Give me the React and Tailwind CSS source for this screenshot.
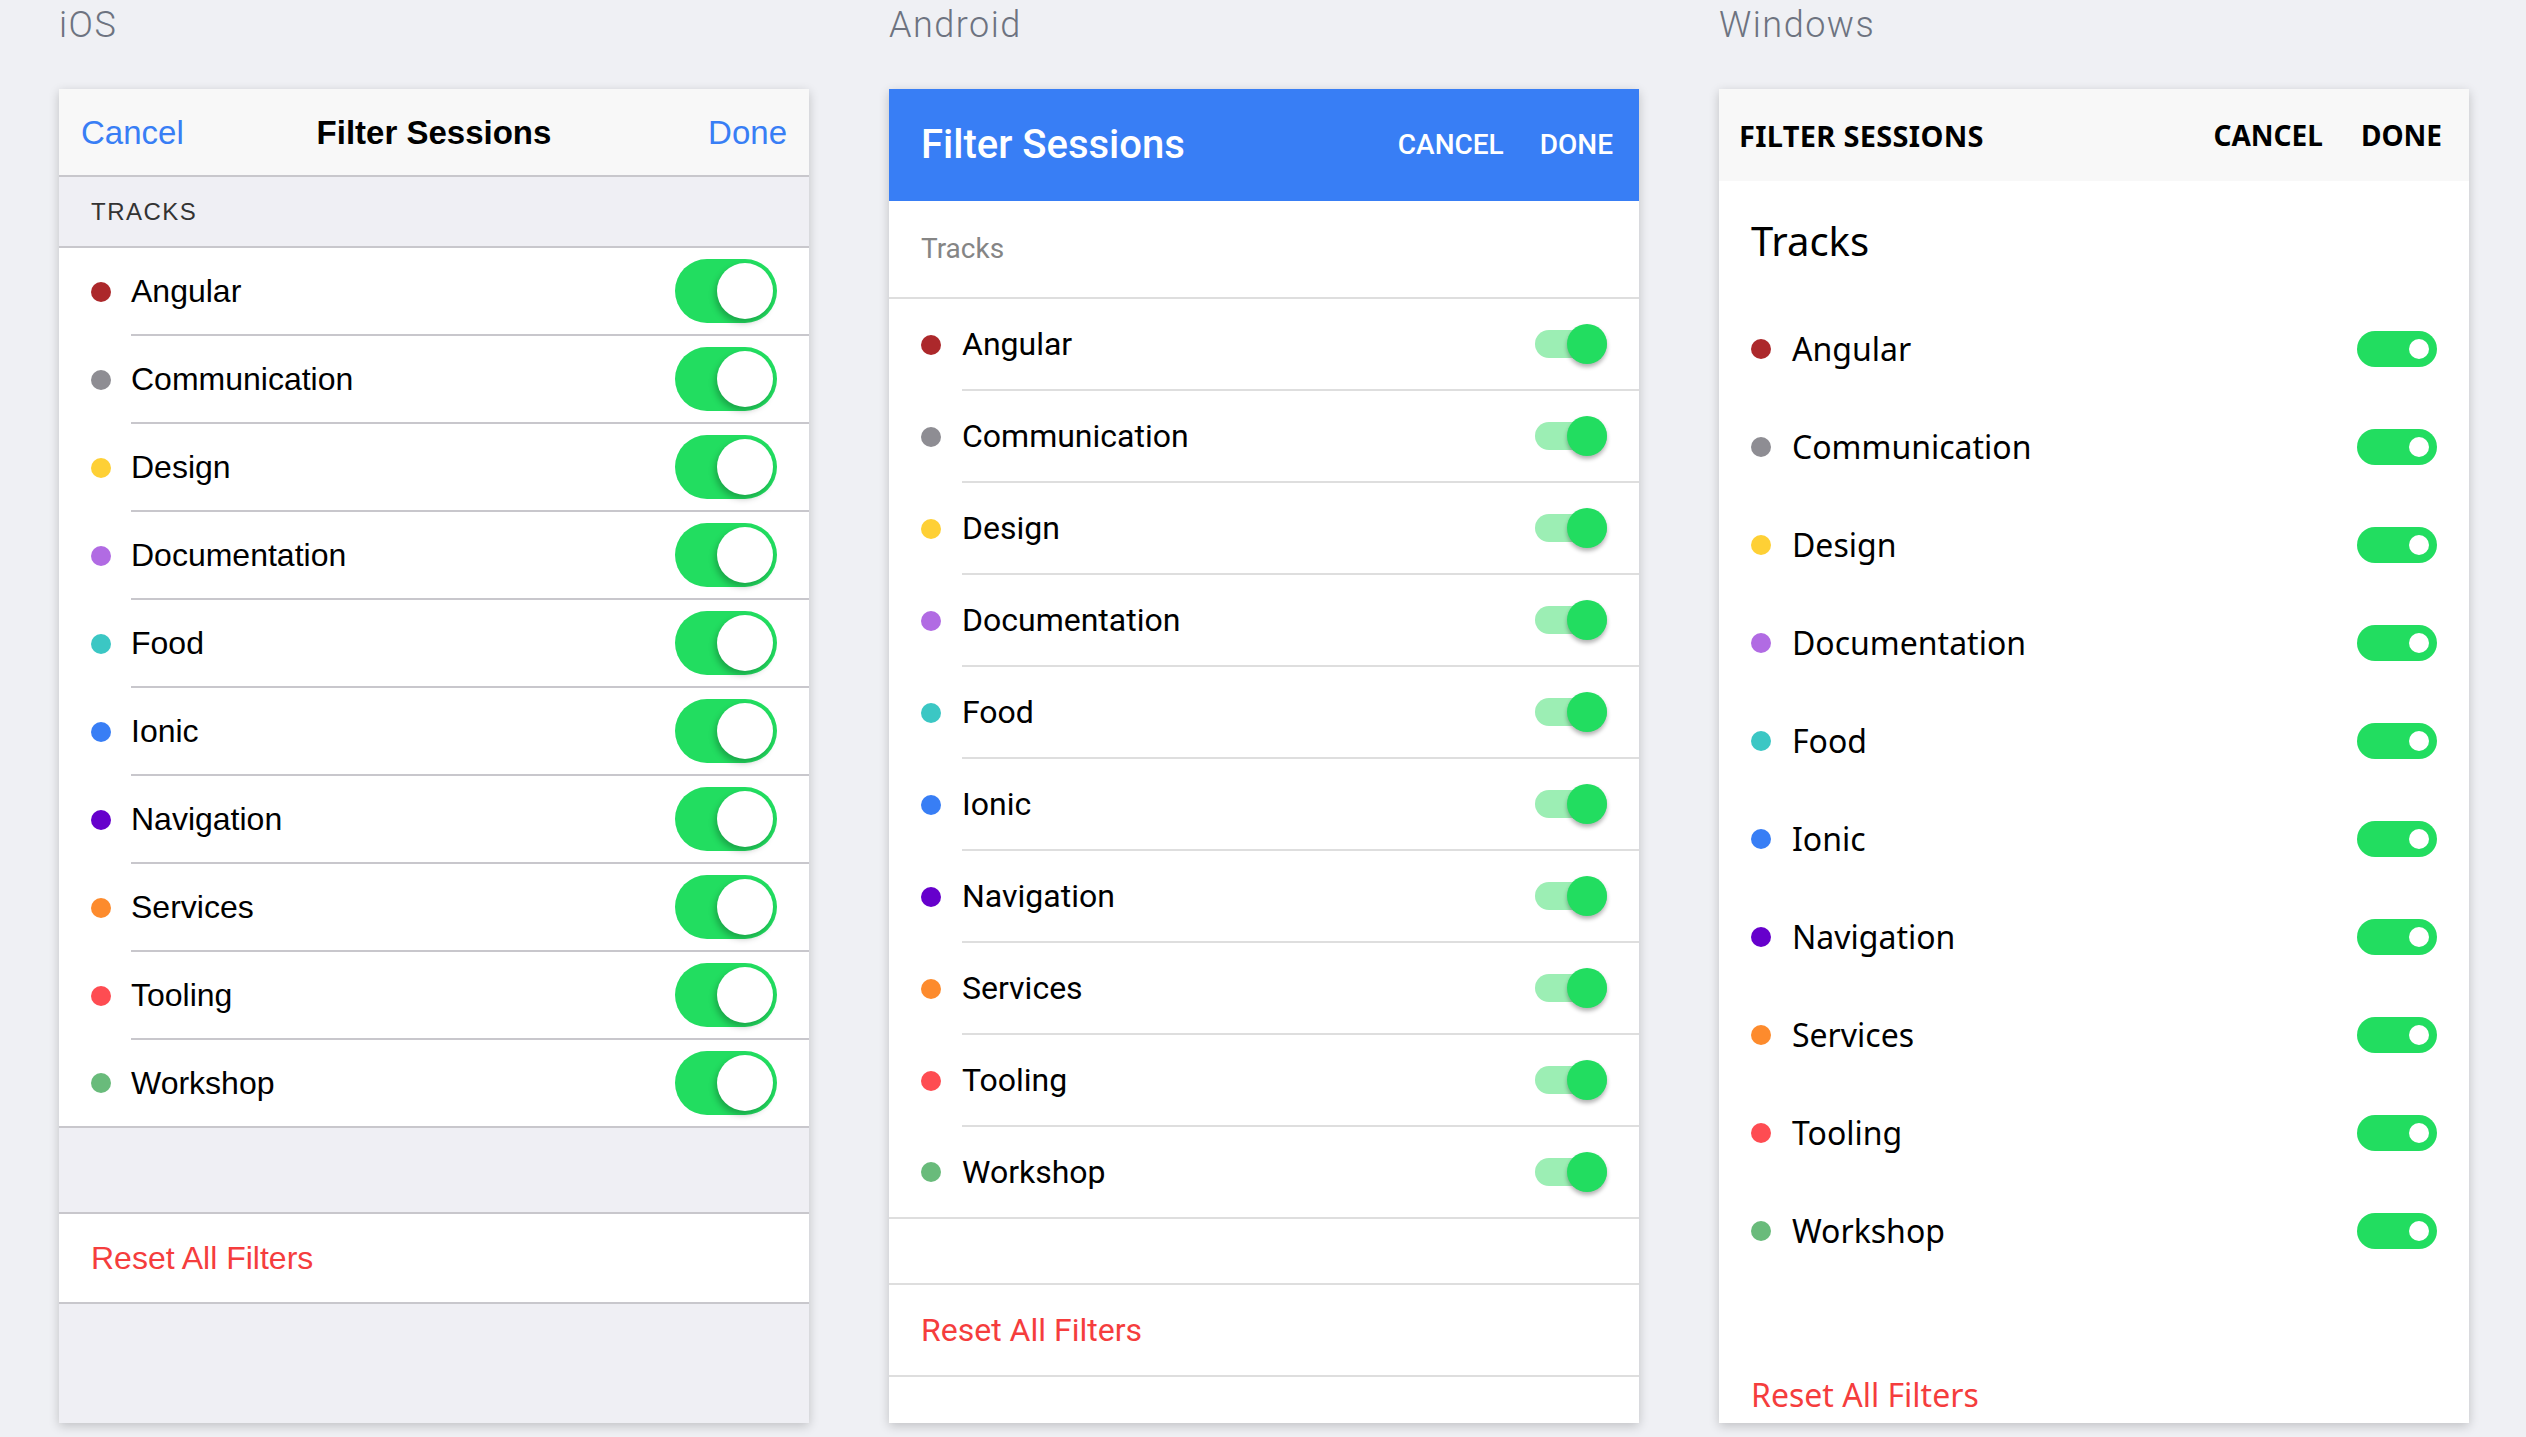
import React from "react";

const tracks = [
  { name: "Angular", color: "bg-[#ac282b]" },
  { name: "Communication", color: "bg-[#8e8d93]" },
  { name: "Design", color: "bg-[#fed035]" },
  { name: "Documentation", color: "bg-[#b16be3]" },
  { name: "Food", color: "bg-[#3bc7c4]" },
  { name: "Ionic", color: "bg-[#387ef5]" },
  { name: "Navigation", color: "bg-[#6600cc]" },
  { name: "Services", color: "bg-[#fd8b2d]" },
  { name: "Tooling", color: "bg-[#fe4c52]" },
  { name: "Workshop", color: "bg-[#69bb7b]" },
];

function Dot({ color }) {
  return <span className={`h-5 w-5 shrink-0 rounded-full ${color}`} />;
}

function IosToggle() {
  return (
    <div className="relative h-[64px] w-[102px] rounded-full bg-[#22dd60]">
      <div className="absolute right-[4px] top-[4px] h-[56px] w-[56px] rounded-full bg-white shadow-[-2px_4px_6px_rgba(0,0,0,0.25)]" />
    </div>
  );
}

function AndroidToggle() {
  return (
    <div className="relative flex h-[40px] w-[72px] items-center">
      <div className="h-[28px] w-[72px] rounded-full bg-[#9ceeb4]" />
      <div className="absolute right-0 top-0 h-[40px] w-[40px] rounded-full bg-[#22dd60] shadow-[0_3px_4px_rgba(0,0,0,0.3)]" />
    </div>
  );
}

function WindowsToggle() {
  return (
    <div className="flex h-[36px] w-[80px] items-center justify-end rounded-full bg-[#22dd60] pr-[8px]">
      <div className="h-[20px] w-[20px] rounded-full bg-white" />
    </div>
  );
}

function IosPanel() {
  return (
    <div className="flex h-[1334px] w-[750px] flex-col overflow-hidden bg-[#efeff4] font-['Liberation_Sans',Arial,sans-serif] shadow-[0_3px_10px_rgba(0,0,0,0.2)]">
      {/* nav bar, title centred on the card */}
      <div className="grid h-[88px] shrink-0 grid-cols-[1fr_auto_1fr] items-center border-b-2 border-[#c8c7cc] bg-[#f8f8f8] px-[22px] text-[33px] leading-none">
        <span className="text-[#387ef5]">Cancel</span>
        <span className="font-bold text-black">Filter Sessions</span>
        <span className="text-right text-[#387ef5]">Done</span>
      </div>
      <div className="flex h-[71px] shrink-0 items-center border-b-2 border-[#c8c7cc] pl-8 text-[24px] uppercase leading-none tracking-[1.5px] text-[#333]">
        Tracks
      </div>
      <div className="bg-white">
        {tracks.map((t, i) => (
          <div
            key={t.name}
            className={`flex h-[88px] items-center pl-8 ${i === tracks.length - 1 ? "border-b-2 border-[#c8c7cc]" : ""}`}
          >
            <Dot color={t.color} />
            <div
              className={`ml-5 flex h-full flex-1 items-center justify-between pr-8 ${i === tracks.length - 1 ? "" : "border-b-2 border-[#c8c7cc]"}`}
            >
              <span className="text-[32px] leading-none text-black">{t.name}</span>
              <IosToggle />
            </div>
          </div>
        ))}
      </div>
      <div className="h-[86px] shrink-0 border-b-2 border-[#c8c7cc]" />
      <div className="flex h-[90px] shrink-0 items-center border-b-2 border-[#c8c7cc] bg-white pl-8 text-[32px] leading-none text-[#f53d3d]">
        Reset All Filters
      </div>
      <div className="flex-1" />
    </div>
  );
}

function AndroidPanel() {
  return (
    <div className="flex h-[1334px] w-[750px] flex-col overflow-hidden bg-white font-['Roboto',sans-serif] shadow-[0_3px_10px_rgba(0,0,0,0.2)]">
      <div className="flex h-[112px] shrink-0 items-center justify-between bg-[#387ef5] pl-8 pr-[26px] leading-none text-white">
        <span className="text-[40px] font-medium">Filter Sessions</span>
        <div className="flex gap-[36px] text-[28px] font-medium">
          <span>CANCEL</span>
          <span>DONE</span>
        </div>
      </div>
      <div className="flex h-[98px] shrink-0 items-center border-b-2 border-[#dedede] pl-8 text-[28px] leading-none text-[#858585]">
        Tracks
      </div>
      <div>
        {tracks.map((t, i) => (
          <div
            key={t.name}
            className={`flex h-[92px] items-center pl-8 ${i === tracks.length - 1 ? "border-b-2 border-[#dedede]" : ""}`}
          >
            <Dot color={t.color} />
            <div
              className={`ml-[21px] flex h-full flex-1 items-center justify-between pr-8 ${i === tracks.length - 1 ? "" : "border-b-2 border-[#dedede]"}`}
            >
              <span className="text-[32px] leading-none text-black">{t.name}</span>
              <AndroidToggle />
            </div>
          </div>
        ))}
      </div>
      <div className="h-[66px] shrink-0 border-b-2 border-[#dedede]" />
      <div className="flex h-[92px] shrink-0 items-center border-b-2 border-[#dedede] pl-8 text-[32px] leading-none text-[#f53d3d]">
        Reset All Filters
      </div>
    </div>
  );
}

function WindowsPanel() {
  return (
    <div className="flex h-[1334px] w-[750px] flex-col overflow-hidden bg-white font-['Noto_Sans',sans-serif] shadow-[0_3px_10px_rgba(0,0,0,0.2)]">
      <div className="flex h-[92px] shrink-0 items-center justify-between bg-[#f8f8f8] pl-5 pr-[27px] leading-none text-black">
        <span className="text-[29px] font-bold tracking-[0.3px]">FILTER SESSIONS</span>
        <div className="flex gap-[38px] text-[28px] font-bold">
          <span>CANCEL</span>
          <span>DONE</span>
        </div>
      </div>
      <div className="flex h-[119px] shrink-0 items-center pl-8 text-[40px] leading-none text-black">
        Tracks
      </div>
      {tracks.map((t) => (
        <div key={t.name} className="flex h-[98px] shrink-0 items-center pl-8 pr-8">
          <Dot color={t.color} />
          <span className="ml-[21px] flex-1 text-[32px] leading-none text-black">{t.name}</span>
          <WindowsToggle />
        </div>
      ))}
      <div className="h-[66px] shrink-0" />
      <div className="flex h-[98px] shrink-0 items-center pl-8 text-[32px] leading-none text-[#f53d3d]">
        Reset All Filters
      </div>
    </div>
  );
}

export default function App() {
  const platforms = [
    { label: "iOS", panel: <IosPanel /> },
    { label: "Android", panel: <AndroidPanel /> },
    { label: "Windows", panel: <WindowsPanel /> },
  ];

  return (
    <div className="flex h-[1437px] w-[2526px] gap-[80px] overflow-hidden bg-[#eff0f4] pl-[59px]">
      {platforms.map((p) => (
        <div key={p.label} className="flex flex-col">
          <div className="h-[89px] font-['Roboto',sans-serif] text-[36px] font-light leading-[50px] tracking-[1.5px] text-[#6d7380]">
            {p.label}
          </div>
          {p.panel}
        </div>
      ))}
    </div>
  );
}
